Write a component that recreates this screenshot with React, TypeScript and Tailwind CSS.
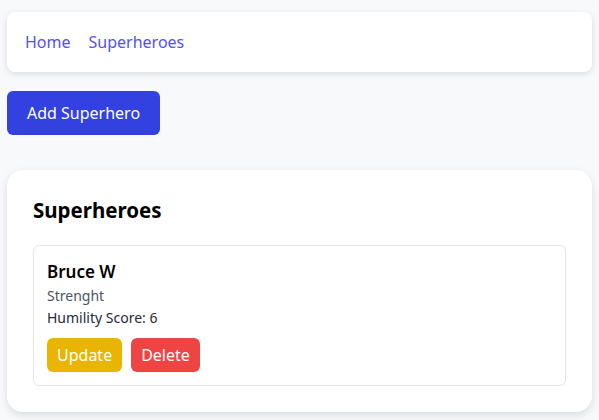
export default function App() {
  return (
    <div
      className="min-h-[420px] bg-[#f8f9fb] px-[7px] pt-[12px] pb-4"
      style={{ fontFamily: '"Noto Sans", "Open Sans", sans-serif' }}
    >
      {/* Nav */}
      <nav className="rounded-lg bg-white px-[18px] py-[18px] shadow-[0_2px_6px_rgba(0,0,0,0.12)]">
        <div className="flex items-center gap-[18px] text-base leading-6 text-[#5252f0]">
          <a href="#">Home</a>
          <a href="#">Superheroes</a>
        </div>
      </nav>

      {/* Add button */}
      <button className="mt-[19px] rounded-md bg-[#3341e0] px-5 py-2.5 text-base leading-6 text-white">
        Add Superhero
      </button>

      {/* List */}
      <section className="mt-[35px] rounded-2xl bg-white p-[26px] shadow-[0_3px_8px_rgba(0,0,0,0.12)]">
        <h2 className="mb-[21px] text-[20.5px] leading-7 font-bold text-black">Superheroes</h2>
        <div className="rounded-md border border-[#e5e5e5] p-[13px]">
          <div className="text-[17px] leading-[26px] font-semibold text-black">Bruce W</div>
          <div className="text-sm leading-[22px] text-[#4b5563]">Strenght</div>
          <div className="text-sm leading-[22px] text-[#1f2937]">Humility Score: 6</div>
          <div className="mt-[9px] flex gap-[9px]">
            <button className="rounded-md bg-[#e9b500] px-[10px] py-[5px] text-base leading-6 text-white">
              Update
            </button>
            <button className="rounded-md bg-[#ef4444] px-[10px] py-[5px] text-base leading-6 text-white">
              Delete
            </button>
          </div>
        </div>
      </section>
    </div>
  )
}
